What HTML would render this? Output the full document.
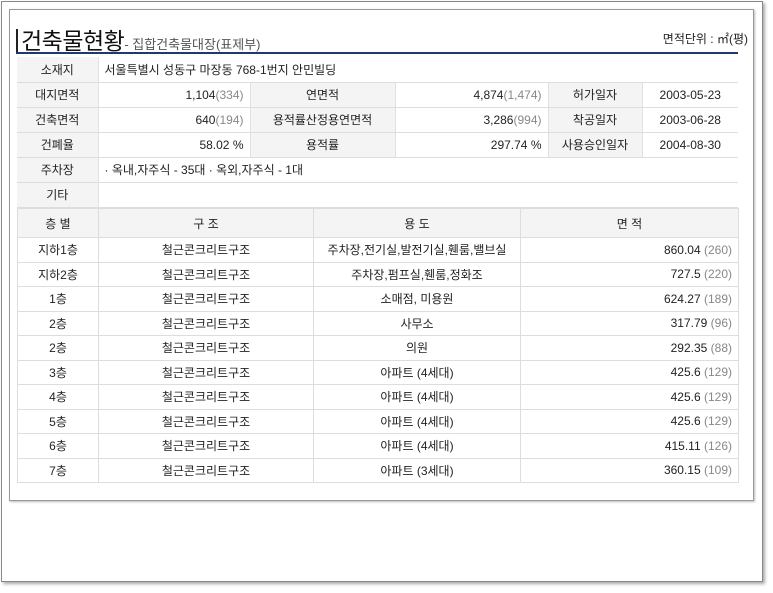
<!DOCTYPE html>
<html><head><meta charset="utf-8"><style>
*{margin:0;padding:0;box-sizing:border-box}
body{width:773px;height:593px;background:#fff;position:relative;overflow:hidden;font-family:"Liberation Sans","Noto Sans CJK KR",sans-serif;font-size:12px;color:#222}
.outer{position:absolute;left:1px;top:1px;width:762px;height:581px;border:1px solid #888;box-shadow:2px 2px 3px #aaa;background:#fff}
.inner{position:absolute;left:9px;top:9px;width:745px;height:492px;border:1px solid #999;box-shadow:1px 1px 2px #bbb}
.title{position:absolute;left:16px;top:22px;font-size:23px;color:#111;letter-spacing:-0.5px;white-space:nowrap}
.title .bar{display:inline-block;width:2px;height:24px;background:#222;vertical-align:-4px;margin-right:3px}
.title small{font-size:13px;color:#555;letter-spacing:0}
.unit{position:absolute;right:25px;top:30px;font-size:12px}
.line{position:absolute;left:16px;top:52px;width:722px;height:2px;background:#1e3a6a}
table{position:absolute;border-collapse:collapse;table-layout:fixed}
td{border-bottom:1px solid #ddd;padding:0 6px;white-space:nowrap;overflow:hidden}
.t1{left:17px;top:57px;width:721px}
.t1 td{height:25px}
.lb{background:#f4f4f4;text-align:center;border-right:1px solid #e0e0e0}
.r{text-align:right;border-right:1px solid #e0e0e0}
.g{color:#888}
.t2{left:17px;top:208px;width:721px;background:#fff;border:1px solid #ddd}
.t2 td{height:24.5px;text-align:center;border-right:1px solid #ddd}
.t2 tr.h td{background:#f4f4f4;height:29px}
.t2 td.num{text-align:right}
</style></head><body>
<div class="outer"></div>
<div class="inner"></div>
<div class="title"><span class="bar"></span>건축물현황<small>- 집합건축물대장(표제부)</small></div>
<div class="unit">면적단위 : ㎡(평)</div>
<div class="line"></div>
<table class="t1">
<col style="width:81px"><col style="width:152px"><col style="width:145px"><col style="width:153px"><col style="width:94px"><col style="width:96px">
<tr><td class="lb">소재지</td><td colspan="5">서울특별시 성동구 마장동 768-1번지 안민빌딩</td></tr>
<tr><td class="lb">대지면적</td><td class="r">1,104<span class="g">(334)</span></td><td class="lb">연면적</td><td class="r">4,874<span class="g">(1,474)</span></td><td class="lb">허가일자</td><td style="text-align:center">2003-05-23</td></tr>
<tr><td class="lb">건축면적</td><td class="r">640<span class="g">(194)</span></td><td class="lb">용적률산정용연면적</td><td class="r">3,286<span class="g">(994)</span></td><td class="lb">착공일자</td><td style="text-align:center">2003-06-28</td></tr>
<tr><td class="lb">건폐율</td><td class="r">58.02 %</td><td class="lb">용적률</td><td class="r">297.74 %</td><td class="lb">사용승인일자</td><td style="text-align:center">2004-08-30</td></tr>
<tr><td class="lb">주차장</td><td colspan="5">· 옥내,자주식 - 35대 · 옥외,자주식 - 1대</td></tr>
<tr><td class="lb">기타</td><td colspan="5"></td></tr>
</table>
<table class="t2">
<col style="width:81px"><col style="width:215px"><col style="width:207px"><col style="width:218px">
<tr class="h"><td>층 별</td><td>구 조</td><td>용 도</td><td>면 적</td></tr>
<tr><td>지하1층</td><td>철근콘크리트구조</td><td>주차장,전기실,발전기실,휀룸,밸브실</td><td class="num">860.04 <span class="g">(260)</span></td></tr>
<tr><td>지하2층</td><td>철근콘크리트구조</td><td>주차장,펌프실,휀룸,정화조</td><td class="num">727.5 <span class="g">(220)</span></td></tr>
<tr><td>1층</td><td>철근콘크리트구조</td><td>소매점, 미용원</td><td class="num">624.27 <span class="g">(189)</span></td></tr>
<tr><td>2층</td><td>철근콘크리트구조</td><td>사무소</td><td class="num">317.79 <span class="g">(96)</span></td></tr>
<tr><td>2층</td><td>철근콘크리트구조</td><td>의원</td><td class="num">292.35 <span class="g">(88)</span></td></tr>
<tr><td>3층</td><td>철근콘크리트구조</td><td>아파트 (4세대)</td><td class="num">425.6 <span class="g">(129)</span></td></tr>
<tr><td>4층</td><td>철근콘크리트구조</td><td>아파트 (4세대)</td><td class="num">425.6 <span class="g">(129)</span></td></tr>
<tr><td>5층</td><td>철근콘크리트구조</td><td>아파트 (4세대)</td><td class="num">425.6 <span class="g">(129)</span></td></tr>
<tr><td>6층</td><td>철근콘크리트구조</td><td>아파트 (4세대)</td><td class="num">415.11 <span class="g">(126)</span></td></tr>
<tr><td>7층</td><td>철근콘크리트구조</td><td>아파트 (3세대)</td><td class="num">360.15 <span class="g">(109)</span></td></tr>
</table>
</body></html>
